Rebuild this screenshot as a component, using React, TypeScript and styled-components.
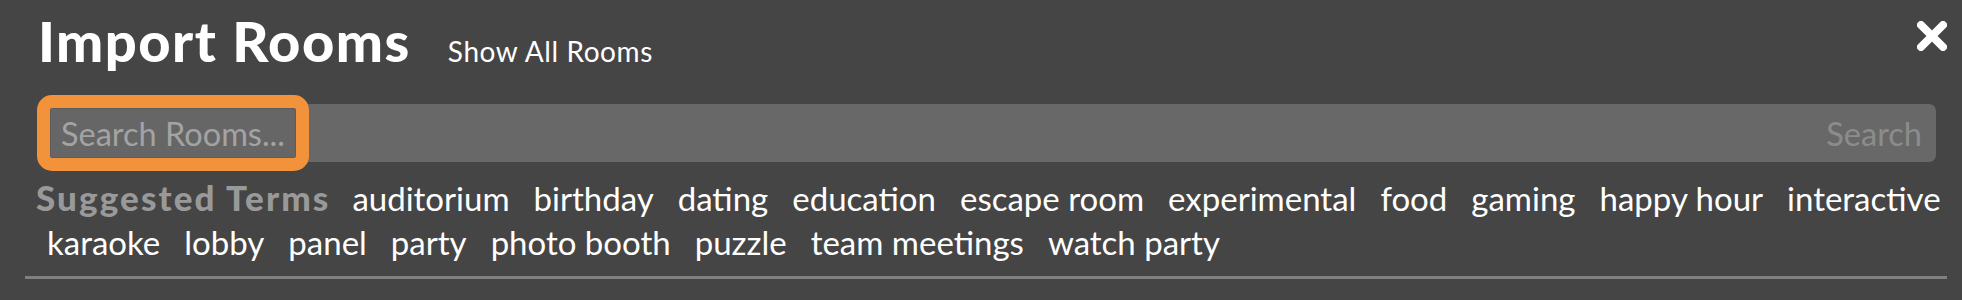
import { createGlobalStyle } from 'styled-components';
import styled from 'styled-components';

const GlobalStyle = createGlobalStyle`
  body {
    margin: 0;
    background: #454545;
    font-family: Lato, "Open Sans", sans-serif;
  }
`;

const Panel = styled.div`
  padding: 0 15px 0 25px;
  background: #454545;
  height: 300px;
  box-sizing: border-box;
`;

const Header = styled.div`
  display: flex;
  align-items: baseline;
  padding: 10px 0 0 13px;
`;

const Title = styled.h1`
  margin: 0;
  font-size: 56px;
  line-height: 62px;
  font-weight: 900;
  letter-spacing: 1.5px;
  color: #ffffff;
`;

const ShowAll = styled.a`
  margin-left: 37px;
  font-size: 28px;
  letter-spacing: 0.6px;
  color: #ffffff;
  cursor: pointer;
`;

const Close = styled.button`
  margin-left: auto;
  align-self: flex-start;
  margin-top: 11px;
  padding: 0;
  border: none;
  background: none;
  width: 30px;
  height: 30px;
  cursor: pointer;
`;

const SearchBar = styled.form`
  display: flex;
  align-items: center;
  justify-content: space-between;
  margin: 32px 11px 0 12px;
  height: 58px;
  box-sizing: border-box;
  padding: 0 14px 0 13px;
  border-radius: 7px;
  background: #686868;
`;

const SearchInput = styled.input`
  width: 246px;
  height: 50px;
  box-sizing: border-box;
  padding: 0 0 0 10px;
  border: 1px solid #5c5c5c;
  border-radius: 2px;
  background: #666666;
  outline: 13px solid #f2923a;
  font-family: inherit;
  font-size: 32.5px;
  color: #ffffff;

  &::placeholder {
    color: #a3a3a3;
  }
`;

const SearchButton = styled.span`
  font-size: 32.5px;
  color: #8c8c8c;
`;

const Terms = styled.div`
  display: flex;
  flex-wrap: wrap;
  align-items: baseline;
  margin: 13px -15px 0 10px;
  font-size: 33px;
  line-height: 44px;
`;

const Label = styled.span`
  font-size: 35px;
  font-weight: 900;
  letter-spacing: 2.1px;
  color: #999999;
  padding: 0 10px 0 1px;
`;

const Term = styled.span`
  color: #ffffff;
  padding: 0 12px;
  cursor: pointer;
`;

const Divider = styled.hr`
  margin: 12px 0 0;
  border: none;
  height: 3px;
  background: #808080;
`;

const terms = [
  'auditorium',
  'birthday',
  'dating',
  'education',
  'escape room',
  'experimental',
  'food',
  'gaming',
  'happy hour',
  'interactive',
  'karaoke',
  'lobby',
  'panel',
  'party',
  'photo booth',
  'puzzle',
  'team meetings',
  'watch party',
];

const App = () => (
  <>
    <GlobalStyle />
    <Panel>
      <Header>
        <Title>Import Rooms</Title>
        <ShowAll>Show All Rooms</ShowAll>
        <Close aria-label="close">
          <svg width="30" height="30" viewBox="0 0 30 30">
            <path
              d="M4 4 L26 26 M26 4 L4 26"
              stroke="#ffffff"
              strokeWidth="8"
              strokeLinecap="round"
            />
          </svg>
        </Close>
      </Header>
      <SearchBar onSubmit={(e) => e.preventDefault()}>
        <SearchInput placeholder="Search Rooms..." />
        <SearchButton>Search</SearchButton>
      </SearchBar>
      <Terms>
        <Label>Suggested Terms</Label>
        {terms.map((t) => (
          <Term key={t}>{t}</Term>
        ))}
      </Terms>
      <Divider />
    </Panel>
  </>
);

export default App;
